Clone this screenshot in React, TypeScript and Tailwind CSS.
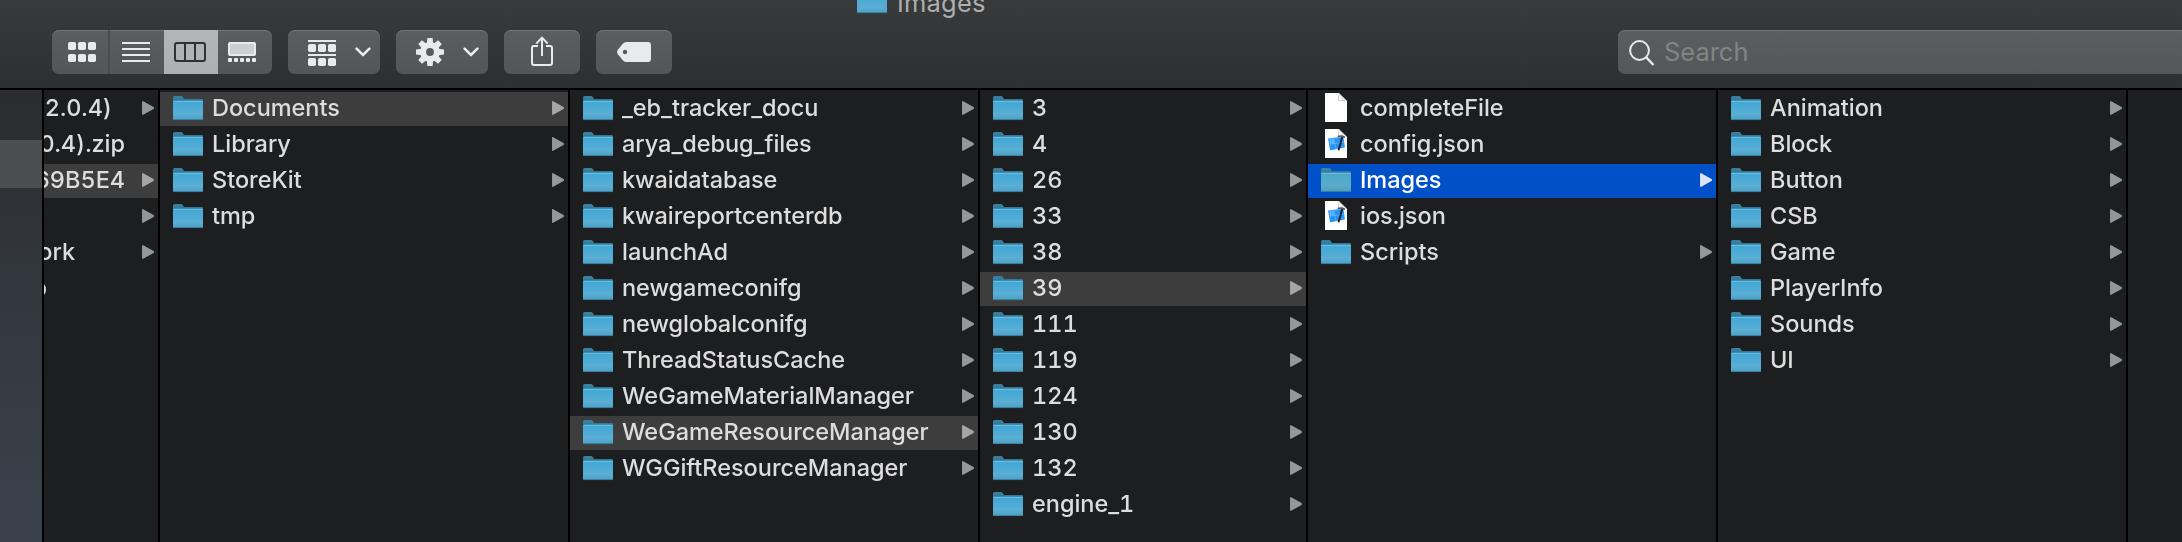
import type { ReactNode } from "react";

type Kind = "folder" | "file" | "json";
type Item = { name: string; kind?: Kind; selected?: boolean; active?: boolean };
type Column = { width: string; items: Item[] };

const folders = (...names: string[]): Item[] => names.map((name) => ({ name }));
const pick = (items: Item[], name: string): Item[] =>
  items.map((item) => (item.name === name ? { ...item, selected: true } : item));

const columns: Column[] = [
  { width: "w-[410px]", items: pick(folders("Documents", "Library", "StoreKit", "tmp"), "Documents") },
  {
    width: "w-[410px]",
    items: pick(
      folders(
        "_eb_tracker_docu",
        "arya_debug_files",
        "kwaidatabase",
        "kwaireportcenterdb",
        "launchAd",
        "newgameconifg",
        "newglobalconifg",
        "ThreadStatusCache",
        "WeGameMaterialManager",
        "WeGameResourceManager",
        "WGGiftResourceManager",
      ),
      "WeGameResourceManager",
    ),
  },
  {
    width: "w-[328px]",
    items: pick(folders("3", "4", "26", "33", "38", "39", "111", "119", "124", "130", "132", "engine_1"), "39"),
  },
  {
    width: "w-[410px]",
    items: [
      { name: "completeFile", kind: "file" },
      { name: "config.json", kind: "json" },
      { name: "Images", active: true },
      { name: "ios.json", kind: "json" },
      { name: "Scripts" },
    ],
  },
  {
    width: "w-[410px]",
    items: folders("Animation", "Block", "Button", "CSB", "Game", "PlayerInfo", "Sounds", "UI"),
  },
];

const clippedItems = [
  { name: "(2.0.4)", width: "w-[68px]", arrow: true },
  { name: "(2.0.4).zip", width: "w-[81px]", arrow: false },
  { name: "69B5E4", width: "w-[81px]", arrow: true, selected: true },
  { name: "", width: "w-[81px]", arrow: true },
  { name: "work", width: "w-[31px]", arrow: true },
  { name: "zip", width: "w-[3px]", arrow: false },
];

function FolderIcon({ active = false }: { active?: boolean }) {
  return (
    <svg width="30" height="25" viewBox="0 0 30 25" className="shrink-0">
      <defs>
        <linearGradient id="folderFront" x1="0" y1="0" x2="0" y2="1">
          <stop offset="0" stopColor="#3fa7d6" />
          <stop offset="0.7" stopColor="#5aafd4" />
          <stop offset="1" stopColor="#4c9dc2" />
        </linearGradient>
        <linearGradient id="folderActive" x1="0" y1="0" x2="0" y2="1">
          <stop offset="0" stopColor="#4aa6c8" />
          <stop offset="0.7" stopColor="#5badcb" />
          <stop offset="1" stopColor="#4c9bb9" />
        </linearGradient>
      </defs>
      <path d="M0 7V1.5Q0 0 1.5 0H8Q9 0 9.8 1L11 3H28.6Q30 3 30 4.4V7Z" fill={active ? "#3d81a0" : "#387f9f"} />
      <path d="M0 4.6H30V23Q30 24 29 24H1Q0 24 0 23Z" fill={active ? "url(#folderActive)" : "url(#folderFront)"} />
      <path d="M0 4.2H30" stroke="#2f6c89" strokeWidth="0.8" />
      <path d="M0.5 5.3H29.5" stroke="#73c3e6" strokeWidth="1" />
      <path d="M0.5 23.6H29.5" stroke="#367b9b" strokeWidth="0.9" />
    </svg>
  );
}

function DocumentIcon({ json = false }: { json?: boolean }) {
  return (
    <svg width="22" height="29" viewBox="0 0 22 29" className="mx-1 shrink-0">
      <path d="M0 0H13L22 8V29H0Z" fill="#fff" />
      <path d="M12.5 0.5V0H14L22 8H16V4Z" fill="#e6e6e6" />
      <path d="M13.5 2.5V7.5H20" fill="none" stroke="#c2c2c2" strokeWidth="0.8" />
      {json && (
        <>
          <path d="M3 9.5L18.5 7.5L20 18.5L5 21.5Z" fill="#3ba1fa" />
          <path d="M4.2 10.4L17.6 8.7L18.8 17.6L5.9 20.2Z" fill="#2492f5" />
          <path d="M4.2 10.4L9 9.8L10 14.6L5 15.5Z" fill="#56b4ff" />
          <path d="M9 9.8L10.8 19.2M5 15.3L18.4 13" stroke="#61b8ff" strokeWidth="0.7" fill="none" />
          <path d="M17.2 8L13.8 20.5" stroke="#1c1f26" strokeWidth="1.9" strokeLinecap="round" />
          <path d="M12.8 7.6Q15 6.4 17.5 7.2L20 8.4" stroke="#555" strokeWidth="1.5" fill="none" />
        </>
      )}
    </svg>
  );
}

function Arrow({ color }: { color: string }) {
  return (
    <svg width="12" height="14" viewBox="0 0 12 14" className="shrink-0">
      <path d="M0.8 0.8L11.2 6.7V7.3L0.8 13.2Z" fill={color} stroke={color} strokeWidth="1.5" strokeLinejoin="round" />
    </svg>
  );
}

function Row({ item }: { item: Item }) {
  const kind = item.kind ?? "folder";
  const background = item.active ? "bg-[#0050c7]" : item.selected ? "bg-[#3d3d3d]" : "";
  const arrow = item.active ? "#dbe5f6" : item.selected ? "#a6a6a6" : "#979797";
  return (
    <div className={`flex h-[34px] items-center pr-1 pl-[13px] ${background}`}>
      {kind === "folder" ? (
        <div className="flex h-[34px] pt-1">
          <FolderIcon active={item.active} />
        </div>
      ) : (
        <div className="flex h-[34px] pt-px">
          <DocumentIcon json={kind === "json"} />
        </div>
      )}
      <span className={`ml-[9px] flex-1 pb-[3px] whitespace-pre leading-[30px] ${item.active ? "text-white" : ""}`}>
        {item.name}
      </span>
      {kind === "folder" && (
        <div className="pb-[2px]">
          <Arrow color={arrow} />
        </div>
      )}
    </div>
  );
}

function Button({ className, children }: { className: string; children: ReactNode }) {
  return (
    <div
      className={`flex h-11 items-center overflow-hidden rounded-[7px] bg-linear-to-b from-[#5c5d5f] to-[#545557] shadow-[inset_0_1px_0_#737476] ${className}`}
    >
      {children}
    </div>
  );
}

function Dots({ y }: { y: number }) {
  return (
    <>
      {[0, 10, 20].map((x) => (
        <rect key={x} x={x} y={y} width="8" height="8" rx="1.8" />
      ))}
    </>
  );
}

function Chevron() {
  return (
    <svg width="16" height="10" viewBox="0 0 16 10" fill="none">
      <path d="M1.6 1.6L8 8L14.4 1.6" stroke="#e9eaec" strokeWidth="2.6" strokeLinecap="round" />
    </svg>
  );
}

function Toolbar() {
  return (
    <div className="flex h-11 items-center gap-4">
      <Button className="w-[220px]">
        <div className="flex h-full w-[58px] items-center border-r-2 border-[#4b4c4e] pl-4">
          <svg width="28" height="20" fill="#e9eaec">
            <Dots y={0} />
            <Dots y={12} />
          </svg>
        </div>
        <div className="flex h-full w-[54px] items-center pl-3">
          <svg width="28" height="20" fill="#e9eaec">
            {[0, 6, 12, 18].map((y) => (
              <rect key={y} y={y} width="28" height="2" />
            ))}
          </svg>
        </div>
        <div className="flex h-full w-[54px] items-center bg-linear-to-b from-[#b4b5b8] to-[#aeafb1] pl-[10px]">
          <svg width="32" height="20" fill="none" stroke="#303133" strokeWidth="2">
            <rect x="1" y="1" width="30" height="18" rx="2" />
            <path d="M11 1V19M21 1V19" />
          </svg>
        </div>
        <div className="flex h-full w-[54px] items-center pl-[10px]">
          <svg width="28" height="20" fill="#e9eaec">
            <rect x="1" y="1" width="26" height="12" rx="1" fill="#cdced0" stroke="#e9eaec" strokeWidth="2" />
            {[0, 6, 12, 18, 24].map((x) => (
              <rect key={x} x={x} y="16" width="4" height="4" rx="1" />
            ))}
          </svg>
        </div>
      </Button>
      <Button className="w-[92px] pl-5">
        <svg width="28" height="26" fill="#e9eaec" className="mt-0.5">
          <rect width="28" height="2" />
          <Dots y={4} />
          <rect y="14" width="28" height="2" />
          <Dots y={18} />
        </svg>
        <div className="ml-[18.5px]">
          <Chevron />
        </div>
      </Button>
      <Button className="w-[92px] pl-5">
        <svg width="28" height="28" viewBox="-14 -14 28 28">
          {[0, 45, 90, 135, 180, 225, 270, 315].map((angle) => (
            <path key={angle} d="M-3.2 -8L-2.6 -14H2.6L3.2 -8Z" fill="#e9eaec" transform={`rotate(${angle})`} />
          ))}
          <circle r="6.9" fill="none" stroke="#e9eaec" strokeWidth="6" />
        </svg>
        <div className="ml-[18.5px]">
          <Chevron />
        </div>
      </Button>
      <Button className="w-[76px] pl-[27px]">
        <svg width="22" height="30" viewBox="0 0 22 30" fill="none" stroke="#e9eaec" strokeWidth="2" className="mb-0.5">
          <path d="M7 10H3Q1 10 1 12V27Q1 29 3 29H19Q21 29 21 27V12Q21 10 19 10H15" />
          <path d="M11 20V1.5M5.3 7.6L11 1.6L16.7 7.6" />
        </svg>
      </Button>
      <Button className="w-[76px] pl-[21px]">
        <svg width="34" height="20" viewBox="0 0 34 20">
          <path
            fillRule="evenodd"
            d="M9.5 0H31Q34 0 34 3V17Q34 20 31 20H9.5Q7.5 20 6 18.5L1 12.5Q-0.8 10 1 7.5L6 1.5Q7.5 0 9.5 0ZM8 7.8A2.2 2.2 0 1 0 8 12.2A2.2 2.2 0 1 0 8 7.8Z"
            fill="#e9eaec"
          />
        </svg>
      </Button>
    </div>
  );
}

export default function App() {
  return (
    <div className="flex h-[542px] w-[2182px] flex-col overflow-hidden bg-[#1d1e20] font-['Inter',sans-serif] text-[23.5px] font-medium tracking-[-0.03px] text-[#dddddd] tabular-nums">
      <header className="relative flex h-[90px] shrink-0 items-start justify-between border-b-2 border-black bg-linear-to-b from-[#393a3c] to-[#2e2f31] pt-[30px] pl-[52px]">
        <div className="absolute top-[-11px] left-[857px] flex items-start">
          <FolderIcon />
          <span className="mt-[-1px] ml-[10px] text-[25.5px] leading-[30px] font-normal tracking-[0.2px] text-[#adaeaf]">
            Images
          </span>
        </div>
        <Toolbar />
        <div className="flex h-11 w-[564px] items-center rounded-l-[7px] bg-linear-to-b from-[#5c5d5f] to-[#545658] pl-[11px] shadow-[inset_0_1px_0_#737476]">
          <svg width="26" height="26" viewBox="0 0 26 26" fill="none" stroke="#e9eaec" strokeWidth="2" className="mt-0.5">
            <circle cx="10.5" cy="10.5" r="9.4" />
            <path d="M17 17.2L24.5 25" strokeWidth="2.4" />
          </svg>
          <span className="ml-[9px] pt-px text-[25.5px] font-normal text-[#838486]">Search</span>
        </div>
      </header>
      <main className="flex min-h-0 flex-1 will-change-transform">
        <div className="w-11 shrink-0 border-r-2 border-black bg-linear-to-b from-[#2a2c2e] via-[#32373d] via-40% to-[#39424b] pt-[50px]">
          <div className="h-12 bg-[#4b4e51]" />
        </div>
        <div className="flex w-[116px] shrink-0 flex-col gap-0.5 border-r-2 border-black pt-0.5">
          {clippedItems.map((item, index) => (
            <div
              key={index}
              className={`flex h-[34px] items-center justify-between pr-1 ${item.selected ? "bg-[#3d3d3d]" : ""}`}
            >
              <div className={`flex justify-end overflow-hidden pb-[3px] leading-[30px] ${item.width}`}>
                <span className="whitespace-pre">{item.name}</span>
              </div>
              {item.arrow && (
                <div className="pb-[2px]">
                  <Arrow color={item.selected ? "#a6a6a6" : "#979797"} />
                </div>
              )}
            </div>
          ))}
        </div>
        {columns.map((column, index) => (
          <div key={index} className={`flex shrink-0 flex-col gap-0.5 border-r-2 border-black pt-0.5 ${column.width}`}>
            {column.items.map((item) => (
              <Row key={item.name} item={item} />
            ))}
          </div>
        ))}
      </main>
    </div>
  );
}
